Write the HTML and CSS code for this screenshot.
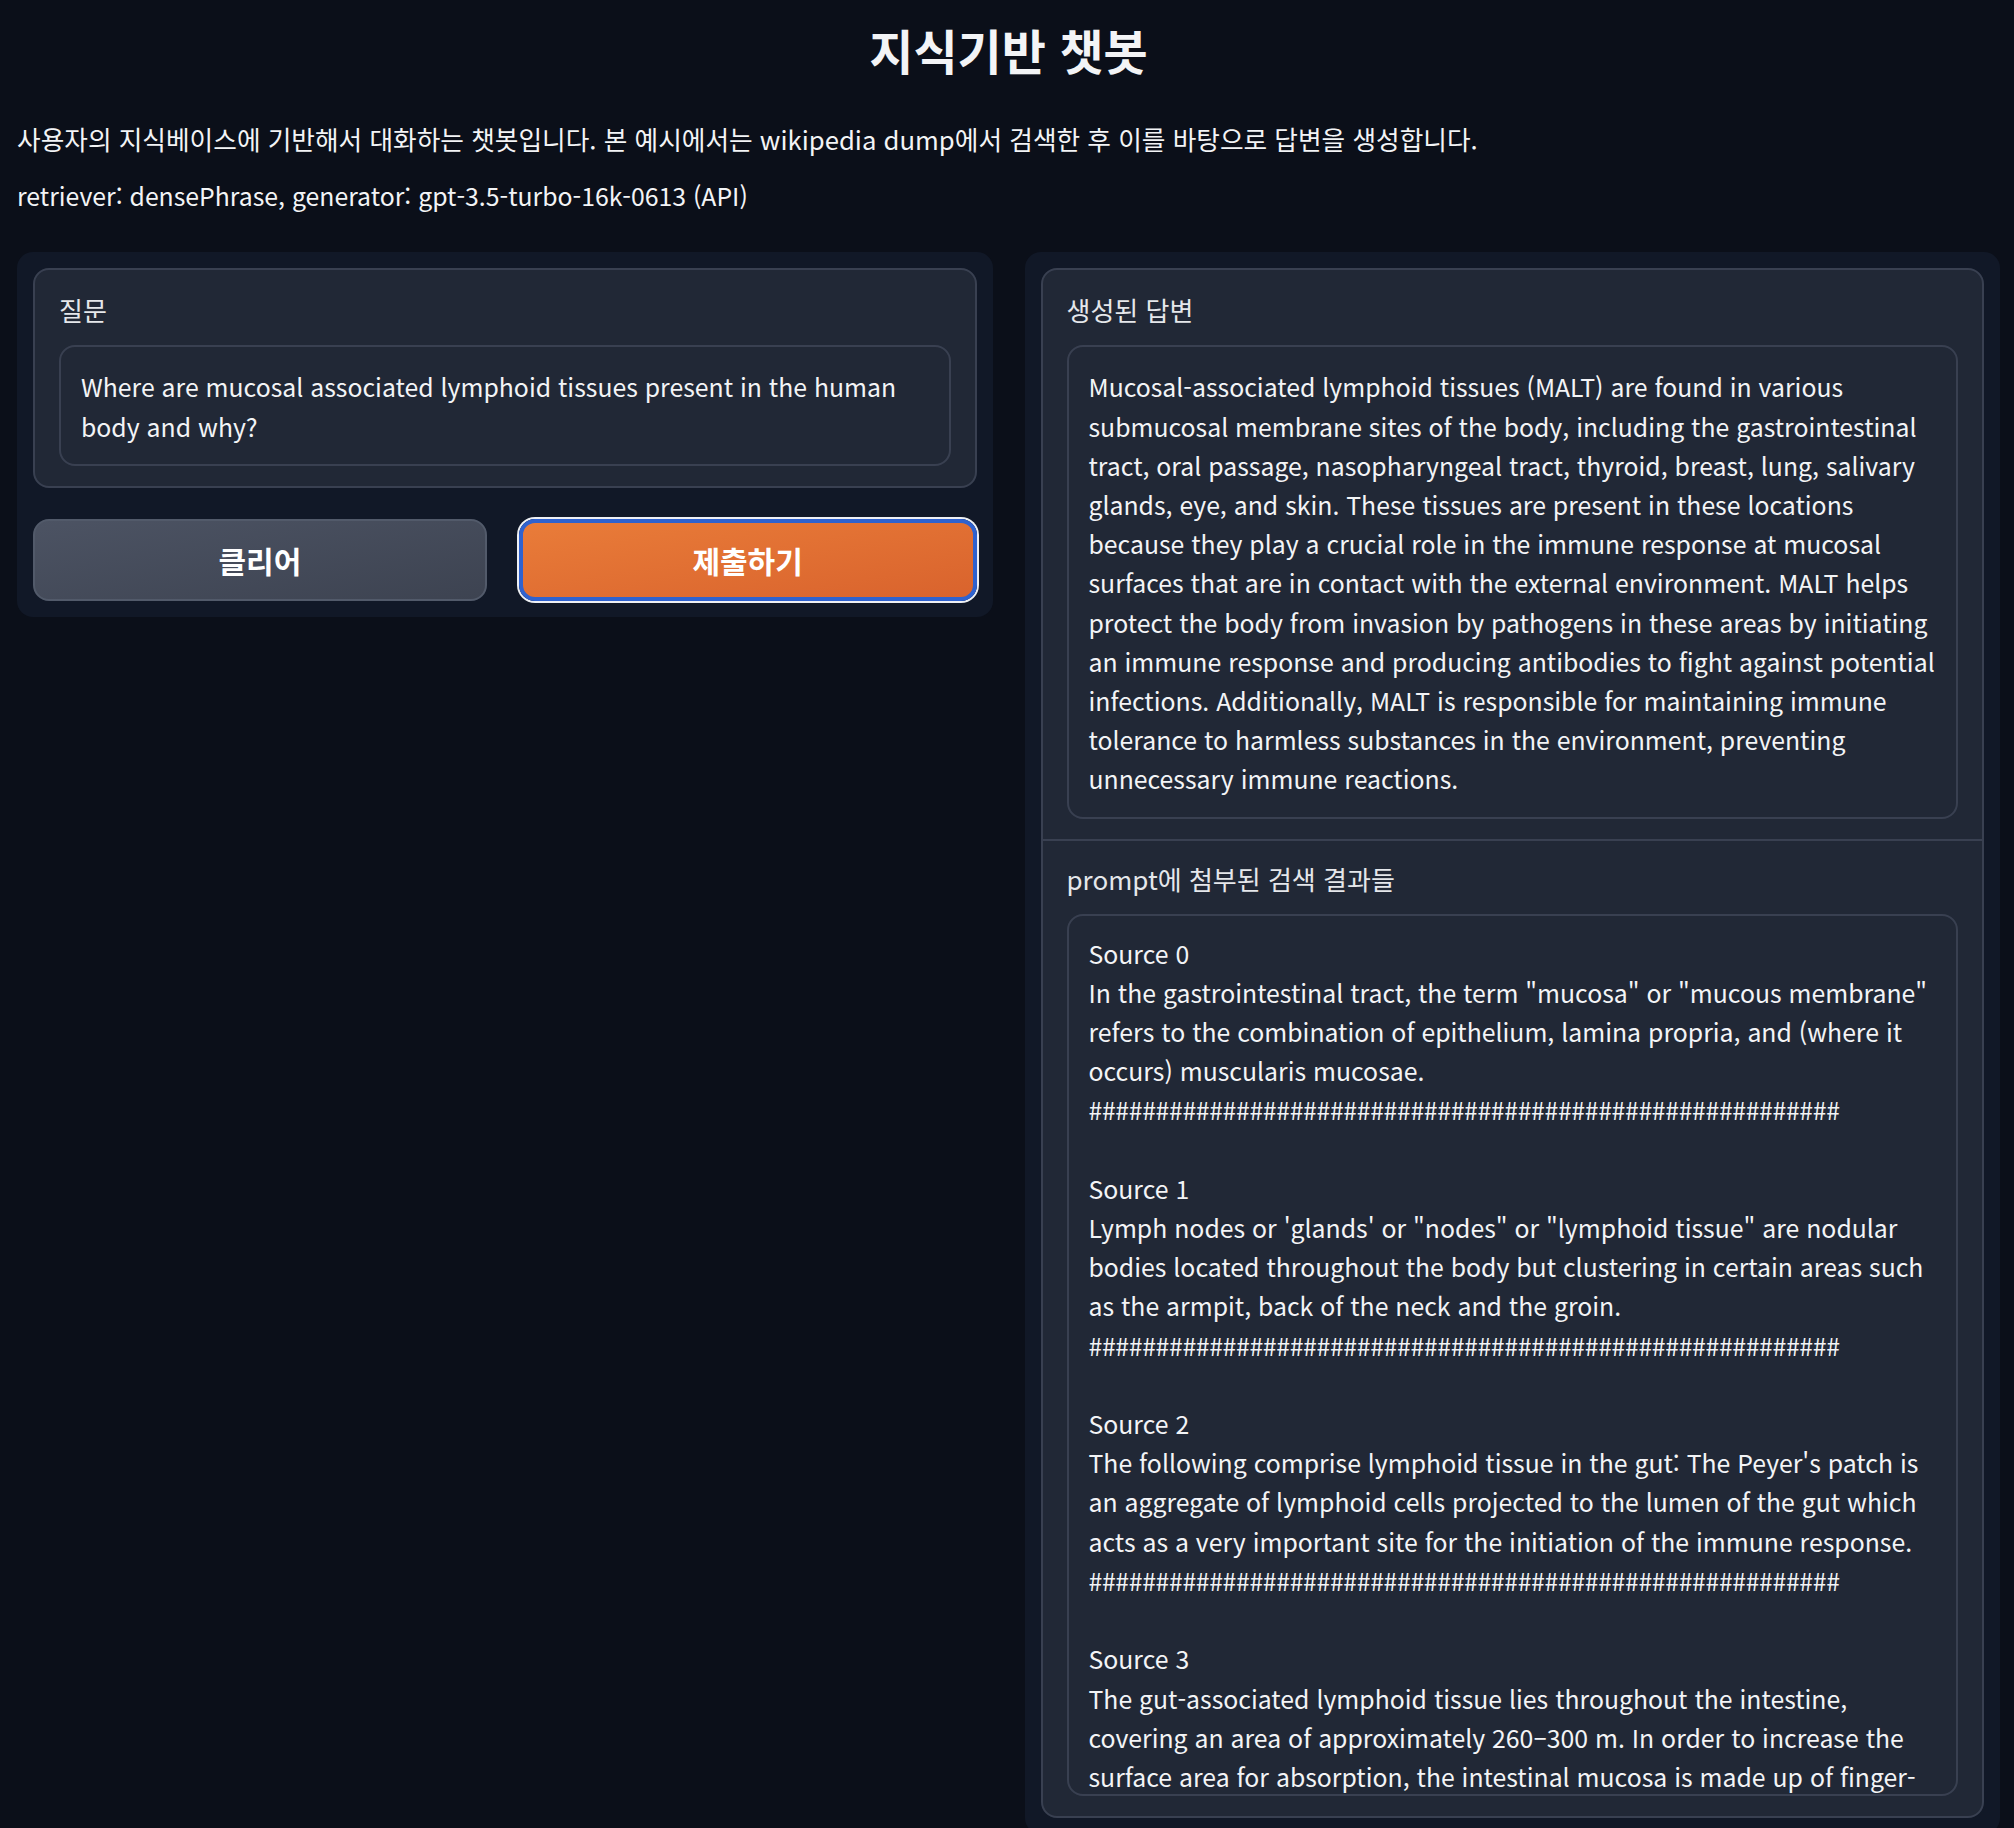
FILE: index.html
```html
<!DOCTYPE html>
<html lang="ko">
<head>
<meta charset="utf-8">
<title>지식기반 챗봇</title>
<link rel="stylesheet" href="styles.css">
</head>
<body>
<div class="app">
  <header class="intro">
    <h1 class="title">지식기반 챗봇</h1>
    <p class="desc desc-ko">사용자의 지식베이스에 기반해서 대화하는 챗봇입니다. 본 예시에서는 wikipedia dump에서 검색한 후 이를 바탕으로 답변을 생성합니다.</p>
    <p class="desc desc-en">retriever: densePhrase, generator: gpt-3.5-turbo-16k-0613 (API)</p>
  </header>
  <main class="columns">
    <section class="panel">
      <div class="block">
        <div class="block-title">질문</div>
        <div class="field">Where are mucosal associated lymphoid tissues present in the human
body and why?</div>
      </div>
      <div class="buttons">
        <button class="btn btn-secondary" type="button">클리어</button>
        <button class="btn btn-primary" type="button">제출하기</button>
      </div>
    </section>
    <section class="panel">
      <div class="group">
        <div class="group-item">
          <div class="block-title">생성된 답변</div>
          <div class="field">Mucosal-associated lymphoid tissues (MALT) are found in various
submucosal membrane sites of the body, including the gastrointestinal
tract, oral passage, nasopharyngeal tract, thyroid, breast, lung, salivary
glands, eye, and skin. These tissues are present in these locations
because they play a crucial role in the immune response at mucosal
surfaces that are in contact with the external environment. MALT helps
protect the body from invasion by pathogens in these areas by initiating
an immune response and producing antibodies to fight against potential
infections. Additionally, MALT is responsible for maintaining immune
tolerance to harmless substances in the environment, preventing
unnecessary immune reactions.</div>
        </div>
        <div class="group-item group-item-sources">
          <div class="block-title">prompt에 첨부된 검색 결과들</div>
          <div class="field field-sources">Source 0
In the gastrointestinal tract, the term "mucosa" or "mucous membrane"
refers to the combination of epithelium, lamina propria, and (where it
occurs) muscularis mucosae.
<span class="rule">########################################################</span>

Source 1
Lymph nodes or 'glands' or "nodes" or "lymphoid tissue" are nodular
bodies located throughout the body but clustering in certain areas such
as the armpit, back of the neck and the groin.
<span class="rule">########################################################</span>

Source 2
The following comprise lymphoid tissue in the gut: The Peyer's patch is
an aggregate of lymphoid cells projected to the lumen of the gut which
acts as a very important site for the initiation of the immune response.
<span class="rule">########################################################</span>

Source 3
The gut-associated lymphoid tissue lies throughout the intestine,
covering an area of approximately 260–300 m. In order to increase the
surface area for absorption, the intestinal mucosa is made up of finger-</div>
        </div>
      </div>
    </section>
  </main>
</div>
</body>
</html>
```
FILE: styles.css
```css
* {
  box-sizing: border-box;
}

html {
  overflow: hidden;
}

html,
body {
  margin: 0;
  background: #0b0f19;
}

body {
  font-family: "Noto Sans CJK KR", "Noto Sans", sans-serif;
  font-feature-settings: "palt";
  color: #f3f4f6;
  font-size: 24.8px;
  line-height: 1.4;
}

.app {
  padding: 0 14px 0 17px;
}

.title {
  margin: 0;
  padding-top: 18px;
  font-size: 48px;
  line-height: 62px;
  font-weight: 700;
  text-align: center;
}

.desc {
  margin: 0;
  line-height: 39.2px;
}

.desc-ko {
  font-size: 25.7px;
}

.desc-en {
  font-feature-settings: normal;
}

.title + .desc {
  margin-top: 39px;
}

.desc + .desc {
  margin-top: 18px;
}

.columns {
  display: flex;
  align-items: flex-start;
  gap: 32px;
  margin-top: 37px;
}

.panel {
  flex: 1 1 0;
  min-width: 0;
  background: #111827;
  border-radius: 16px;
  padding: 16px;
}

.block,
.group {
  background: #212836;
  border: 2px solid #394051;
  border-radius: 16px;
}

.block,
.group-item {
  padding: 20px 24px;
}

.group-item + .group-item {
  border-top: 2px solid #394051;
}

.group-item-sources {
  padding-top: 18px;
}

.block-title {
  color: #e5e7eb;
  font-size: 26px;
  line-height: 39px;
  margin-bottom: 16px;
}

.field {
  border: 2px solid #394051;
  border-radius: 16px;
  padding: 20px 20px 18px;
  white-space: pre;
  overflow: hidden;
  line-height: 39.2px;
  color: #f3f4f6;
  font-feature-settings: normal;
}

.field-sources {
  height: 882px;
  padding-top: 18px;
}

.rule {
  letter-spacing: -0.35px;
}

.buttons {
  display: flex;
  gap: 32px;
  margin-top: 31px;
}

.btn {
  flex: 1 1 0;
  height: 82px;
  border-radius: 16px;
  font-family: inherit;
  font-feature-settings: "palt";
  font-size: 30px;
  font-weight: 700;
  color: #ffffff;
  cursor: pointer;
}

.btn-secondary {
  background: linear-gradient(to bottom right, #4c5363, #3d4351);
  border: 2px solid #525a6a;
}

.btn-primary {
  background: linear-gradient(to bottom right, #e97c39, #d9632d);
  border: 4px solid #2f62cf;
  box-shadow: 0 0 0 2px #eef0f4;
}
```
